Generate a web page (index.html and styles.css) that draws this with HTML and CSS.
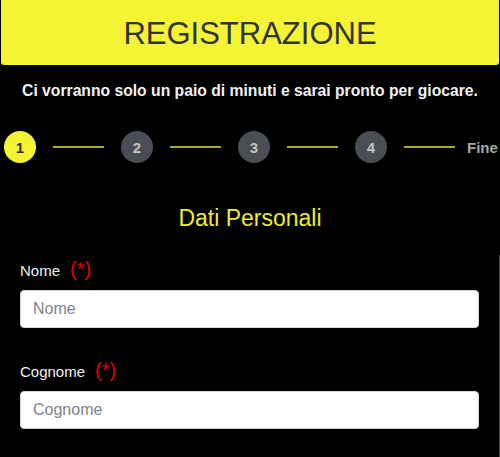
FILE: index.html
```html
<!DOCTYPE html>
<html lang="it">
<head>
<meta charset="utf-8">
<title>Registrazione</title>
<link rel="stylesheet" href="styles.css">
</head>
<body>
<header class="hero">
  <h1 class="hero-title">REGISTRAZIONE</h1>
</header>
<p class="intro">Ci vorranno solo un paio di minuti e sarai pronto per giocare.</p>
<div class="steps">
  <span class="step active">1</span>
  <span class="step-line"></span>
  <span class="step">2</span>
  <span class="step-line"></span>
  <span class="step">3</span>
  <span class="step-line"></span>
  <span class="step">4</span>
  <span class="step-line step-line-last"></span>
  <span class="step-end">Fine</span>
</div>
<h2 class="section-title">Dati Personali</h2>
<form class="form">
  <div class="form-group">
    <label class="label" for="nome">Nome<span class="req">(*)</span></label>
    <input class="input" id="nome" type="text" placeholder="Nome">
  </div>
  <div class="form-group">
    <label class="label" for="cognome">Cognome<span class="req">(*)</span></label>
    <input class="input" id="cognome" type="text" placeholder="Cognome">
  </div>
</form>
</body>
</html>
```

FILE: styles.css
```css
html, body {
  margin: 0;
  padding: 0;
  background: #000;
}
body {
  font-family: "Liberation Sans", Arial, Helvetica, sans-serif;
  color: #fff;
  width: 500px;
  height: 457px;
  overflow: hidden;
}
.hero {
  margin: 0 1px;
  height: 65px;
  background: #f4f434;
  border-radius: 0 0 3px 3px;
  display: flex;
  align-items: center;
  justify-content: center;
}
.hero-title {
  margin: 0;
  font-size: 31px;
  font-weight: normal;
  color: #333;
  line-height: 1;
  padding-top: 1px;
}
.intro {
  margin: 17px 0 0;
  text-align: center;
  font-size: 15.7px;
  font-weight: bold;
  line-height: 18px;
  color: #f2f2f2;
}
.steps {
  margin-top: 31px;
  padding-left: 4px;
  display: flex;
  align-items: center;
  white-space: nowrap;
  overflow: hidden;
}
.step {
  flex: none;
  width: 32px;
  height: 32px;
  border-radius: 50%;
  background: #4a4d53;
  color: #c4c4c4;
  font-size: 15px;
  font-weight: bold;
  display: flex;
  align-items: center;
  justify-content: center;
}
.step.active {
  background: #f4f434;
  color: #333;
}
.step-line {
  flex: none;
  width: 51px;
  height: 2px;
  margin: 0 17px;
  background: #a9ac1e;
}
.step-line-last {
  margin-right: 12px;
}
.step-end {
  flex: none;
  font-size: 15px;
  font-weight: bold;
  color: #a8a8a8;
}
.section-title {
  margin: 42px 0 0;
  text-align: center;
  font-size: 23px;
  font-weight: normal;
  line-height: 26px;
  color: #eded2e;
}
.form {
  margin-top: 24px;
  padding: 3px 20px 0;
  border-right: 1px solid #4a4a4a;
  height: 220px;
}
.form-group {
  margin-bottom: 31px;
}
.label {
  display: block;
  font-size: 15px;
  line-height: 22px;
  color: #f2f2f2;
  margin-bottom: 8px;
}
.req {
  color: #e00000;
  font-size: 20px;
  margin-left: 10px;
}
.input {
  display: block;
  box-sizing: border-box;
  width: 100%;
  height: 38px;
  margin: 0;
  padding: 6px 12px;
  font-family: "Liberation Sans", Arial, Helvetica, sans-serif;
  font-size: 16px;
  color: #495057;
  background: #fff;
  border: 1px solid #ced4da;
  border-radius: 4px;
}
.input::placeholder {
  color: #7d848b;
}
```
